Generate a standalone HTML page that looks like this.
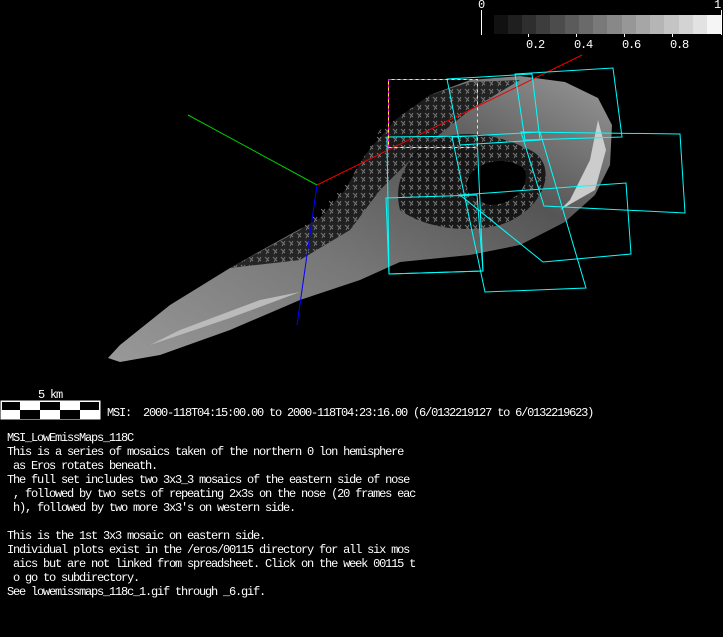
<!DOCTYPE html>
<html><head><style>
body{margin:0;background:#000;width:723px;height:637px;overflow:hidden;position:relative;font-family:"Liberation Mono",monospace;}
.t{position:absolute;color:#fff;font-size:12px;letter-spacing:-1.2px;line-height:14px;white-space:pre;}
</style></head><body>
<svg width="723" height="637" style="position:absolute;left:0;top:0">
<defs>
<linearGradient id="g" x1="0" y1="1" x2="1" y2="0">
<stop offset="0" stop-color="#999"/><stop offset="0.4" stop-color="#777"/><stop offset="0.7" stop-color="#555"/><stop offset="1" stop-color="#999"/>
</linearGradient>
<pattern id="dots" width="8" height="8" patternUnits="userSpaceOnUse"><path d="M1 1l4 4M5 1l-3 5" stroke="#777" stroke-width="1"/></pattern>
</defs>
<g>
<rect x="494" y="15" width="15" height="19" fill="#111"/><rect x="508" y="15" width="15" height="19" fill="#1f1f1f"/>
<rect x="522" y="15" width="15" height="19" fill="#2e2e2e"/><rect x="536" y="15" width="15" height="19" fill="#3d3d3d"/>
<rect x="550" y="15" width="15" height="19" fill="#4c4c4c"/><rect x="565" y="15" width="15" height="19" fill="#5b5b5b"/>
<rect x="579" y="15" width="15" height="19" fill="#6a6a6a"/><rect x="593" y="15" width="15" height="19" fill="#797979"/>
<rect x="607" y="15" width="15" height="19" fill="#888"/><rect x="622" y="15" width="15" height="19" fill="#979797"/>
<rect x="636" y="15" width="15" height="19" fill="#a6a6a6"/><rect x="650" y="15" width="15" height="19" fill="#b5b5b5"/>
<rect x="664" y="15" width="15" height="19" fill="#c4c4c4"/><rect x="679" y="15" width="15" height="19" fill="#d3d3d3"/>
<rect x="693" y="15" width="15" height="19" fill="#e2e2e2"/><rect x="707" y="15" width="15" height="19" fill="#f5f5f5"/>
<line x1="481.5" y1="10" x2="481.5" y2="35" stroke="#fff"/>
<line x1="721.5" y1="10" x2="721.5" y2="35" stroke="#fff"/>
<g stroke="#fff"><line x1="528.5" y1="34" x2="528.5" y2="37"/><line x1="576.5" y1="34" x2="576.5" y2="37"/><line x1="624.5" y1="34" x2="624.5" y2="37"/><line x1="672.5" y1="34" x2="672.5" y2="37"/></g>
</g>
<!-- asteroid -->
<path d="M108 358 L120 345 L170 305 L230 268 L280 240 L320 218 L345 190 L365 155 L395 120 L430 95 L470 80 L520 76 L565 82 L598 98 L612 125 L610 165 L595 195 L565 222 L520 245 L470 255 L400 262 L360 280 L300 300 L230 330 L160 355 L120 362 Z" fill="url(#g)"/>
<path d="M230 268 L300 230 L350 180 L380 130 L430 95 L470 82 L520 80 L470 110 L420 150 L380 190 L350 230 L300 260 Z" fill="#000" opacity="0.7"/>
<path d="M230 268 L300 230 L350 180 L380 130 L430 95 L470 82 L520 80 L470 110 L420 150 L380 190 L350 230 L300 260 Z" fill="url(#dots)"/>
<path d="M410 160 C430 130 480 125 530 150 C560 165 545 210 500 225 C460 235 420 225 400 210 C395 190 400 175 410 160 Z" fill="#000" opacity="0.75"/>
<path d="M410 160 C430 130 480 125 530 150 C560 165 545 210 500 225 C460 235 420 225 400 210 C395 190 400 175 410 160 Z" fill="url(#dots)"/>
<path d="M470 175 C480 160 510 155 525 170 C530 190 510 205 490 205 C470 200 462 188 470 175 Z" fill="#000"/>
<path d="M560 210 L595 190 L606 150 L598 120 L590 160 L570 200 Z" fill="#ccc"/>
<path d="M150 345 L230 318 L300 292 L260 300 L180 330 Z" fill="#bbb"/>
<line x1="317" y1="185" x2="188" y2="115" stroke="#0c0" stroke-width="1"/>
<line x1="317" y1="185" x2="582" y2="55" stroke="#e00" stroke-width="1"/>
<line x1="317" y1="185" x2="297" y2="325" stroke="#00f" stroke-width="1"/>
<g fill="none" stroke="#0ff" stroke-width="1">
<path d="M447 79 L532 74 L540 140 L460 145 Z"/>
<path d="M515 74 L613 68 L622 137 L525 140 Z"/>
<path d="M387 137 L477 136 L483 271 L389 274 Z"/>
<path d="M452 137 L540 132 L586 288 L485 292 Z"/>
<path d="M521 132 L680 134 L685 213 L544 206 Z"/>
<path d="M460 195 L626 183 L631 254 L543 262 Z"/>
<path d="M386 198 L477 195 L483 271 L389 274 Z"/>
</g>
<rect x="388.5" y="79.5" width="89" height="68" fill="none" stroke="#ff0" stroke-width="1"/>
<rect x="388.5" y="79.5" width="89" height="68" fill="none" stroke="#f0f" stroke-width="1" stroke-dasharray="3 3"/>
<rect x="0.5" y="400.5" width="100" height="19" fill="#fff"/>
<g fill="#000">
<rect x="2" y="402" width="18" height="8"/><rect x="40" y="402" width="20" height="8"/><rect x="80" y="402" width="19" height="8"/>
<rect x="20" y="410" width="20" height="9"/><rect x="60" y="410" width="20" height="9"/>
</g>
</svg>
<div class="t" style="left:478px;top:-2px">0</div>
<div class="t" style="left:714px;top:-2px">1</div>
<div class="t" style="left:526px;top:38px">0.2</div>
<div class="t" style="left:574px;top:38px">0.4</div>
<div class="t" style="left:622px;top:38px">0.6</div>
<div class="t" style="left:670px;top:38px">0.8</div>
<div class="t" style="left:38px;top:388px">5 km</div>
<div class="t" style="left:107px;top:406px">MSI:  2000-118T04:15:00.00 to 2000-118T04:23:16.00 (6/0132219127 to 6/0132219623)</div>
<div class="t" style="left:7px;top:431px">MSI_LowEmissMaps_118C
This is a series of mosaics taken of the northern 0 lon hemisphere
 as Eros rotates beneath.
The full set includes two 3x3_3 mosaics of the eastern side of nose
 , followed by two sets of repeating 2x3s on the nose (20 frames eac
 h), followed by two more 3x3's on western side.

This is the 1st 3x3 mosaic on eastern side.
Individual plots exist in the /eros/00115 directory for all six mos
 aics but are not linked from spreadsheet. Click on the week 00115 t
 o go to subdirectory.
See lowemissmaps_118c_1.gif through _6.gif.</div>
</body></html>
